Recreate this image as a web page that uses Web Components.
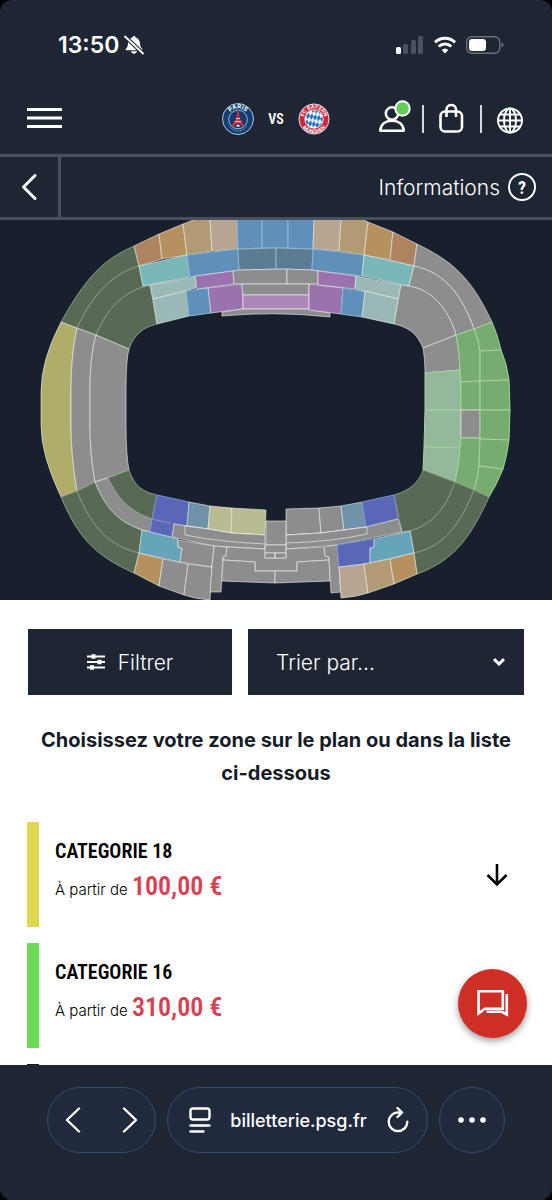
<!DOCTYPE html>
<html lang="fr">
<head>
<meta charset="utf-8">
<meta name="viewport" content="width=device-width, initial-scale=1">
<title>Billetterie</title>
<style>
  html, body {
    margin: 0;
    height: 100%;
    background: #000;
  }
  body {
    font-family: Inter, "Liberation Sans", sans-serif;
    --navy: #1e2533;
    --night: #18202d;
    --line: #4a505e;
    --condensed: "Liberation Sans Narrow", "Roboto Condensed", Roboto, sans-serif;
  }
</style>
</head>
<body>
<ticket-app></ticket-app>

<script>
// Small helper shared by all the elements: opens the shadow root and fills it
class BaseElement extends HTMLElement {
  constructor() {
    super();
    this.attachShadow({ mode: 'open' });
  }

  connectedCallback() {
    this.shadowRoot.innerHTML = this.render();
  }
}

const buttonReset = `
  button {
    appearance: none;
    border: 0;
    margin: 0;
    padding: 0;
    background: none;
    color: inherit;
    font: inherit;
    cursor: pointer;
  }
  svg { display: block; }
`;

// Time, signal, wifi and battery
class StatusBar extends BaseElement {
  render() {
    return `
    <style>
      :host {
        display: flex;
        align-items: center;
        justify-content: space-between;
        padding: 28px 48px 22px 58px;
        height: 34px;
        color: #fff;
      }
      div { display: flex; align-items: center; }
      .time { gap: 5px; font-size: 23px; font-weight: 600; }
      .state { gap: 10px; }
      svg { display: block; }
    </style>
    <div class="time">
      <span>13:50</span>
      <svg width="20" height="20" viewBox="0 0 20 20" fill="#fff">
        <path d="M10 1c.9 0 1.500.6 1.600 1.400C14 3.200 15.800 5.200 16 8c.1 3.500.9 4.500 2.100 5.700.5.6.3 1.500-.6 1.500h-15c-.9 0-1.100-.9-.6-1.500C3.100 12.500 3.900 11.500 4 8c.2-2.800 2-4.800 4.400-5.600C8.500 1.600 9.100 1 10 1z"/>
        <path d="M7 16.300h6c-.3 1.600-1.500 2.400-3 2.400s-2.700-.8-3-2.400z"/>
        <path d="M.5 1 19.500 19" stroke="#1e2533" stroke-width="4"/>
        <path d="M1 1.500 19 18.500" stroke="#fff" stroke-width="1.800" stroke-linecap="round"/>
      </svg>
    </div>
    <div class="state">
      <svg width="28" height="18" viewBox="0 0 28 18" fill="#4b515e">
        <rect x="0" y="11" width="5" height="7" rx="1.500" fill="#fff"/>
        <rect x="7" y="8" width="5" height="10" rx="1.500"/>
        <rect x="15" y="4" width="5" height="14" rx="1.500"/>
        <rect x="22" y="0" width="5" height="18" rx="1.500"/>
      </svg>
      <svg width="22" height="18" viewBox="0 0 22 18" fill="none" stroke="#fff" stroke-width="3">
        <path d="M1 6.300a14.500 14.500 0 0 1 20 0"/>
        <path d="M4.700 10.500a9.200 9.200 0 0 1 12.600 0"/>
        <path d="M11 17.500 7.700 14a4.800 4.800 0 0 1 6.600 0z" fill="#fff" stroke="none"/>
      </svg>
      <svg width="38" height="18" viewBox="0 0 38 18">
        <rect x=".7" y=".7" width="33" height="16.600" rx="5" fill="none" stroke="#6b707b" stroke-width="1.400"/>
        <rect x="3" y="3" width="17" height="12" rx="3" fill="#fff"/>
        <path d="M35.500 6.500c1.400.4 2 1.300 2 2.500s-.6 2.100-2 2.500z" fill="#6b707b"/>
      </svg>
    </div>`;
  }
}
customElements.define('status-bar', StatusBar);

// Round crest of a club, drawn from its "club" attribute
class ClubCrest extends BaseElement {
  render() {
    return `
    <style>
      :host { display: block; }
      svg { display: block; }
      text { font-family: Inter, sans-serif; font-weight: 700; fill: #fff; text-anchor: middle; }
    </style>
    ${this.getAttribute('club') === 'psg' ? this.#psg() : this.#bayern()}`;
  }

  #psg() {
    return `
    <svg width="32" height="32" viewBox="0 0 32 32" role="img" aria-label="PSG">
      <circle cx="16" cy="16" r="15.500" fill="#123f76" stroke="#c9d3de" stroke-width=".9"/>
      <circle cx="16" cy="16.500" r="9.300" fill="#16396c" stroke="#c9d3de" stroke-width=".8"/>
      <path id="arc" d="M6 15.500a10 10 0 0 1 20 0" fill="none"/>
      <text font-size="6"><textPath href="#arc" startOffset="50%">PARIS</textPath></text>
      <path d="M15.500 7h1l.8 6c.4 3.500 2.200 6.500 5 9.300l-2.600 1.500c-.5-2.200-1.700-3.400-3.700-3.400s-3.200 1.200-3.700 3.400l-2.600-1.500c2.800-2.800 4.600-5.800 5-9.300z" fill="#dc2b35"/>
      <path d="M13.800 15.500h4.400M12.500 18.600h7" stroke="#e9edf2" stroke-width=".8"/>
      <path d="M14 23.500c.3-1.200 1-1.800 2-1.800s1.700.6 2 1.800z" fill="#fff"/>
      <path d="M7.500 23.500c4.800 6 12.200 6 17 0" fill="none" stroke="#8fa6c2" stroke-width="1" stroke-dasharray="1 .7"/>
    </svg>`;
  }

  #bayern() {
    return `
    <svg width="32" height="32" viewBox="0 0 32 32" role="img" aria-label="FC Bayern">
      <defs>
        <pattern id="lozenge" width="3.600" height="7" patternUnits="userSpaceOnUse" patternTransform="rotate(12)">
          <rect width="3.600" height="7" fill="#fff"/>
          <path d="M1.800 0 3.600 3.500 1.800 7 0 3.500z" fill="#1568b4"/>
        </pattern>
      </defs>
      <circle cx="16" cy="16" r="15.600" fill="#2a62a5"/>
      <circle cx="16" cy="16" r="15" fill="#d32439" stroke="#fff" stroke-width=".8"/>
      <circle cx="16" cy="16" r="9.200" fill="url(#lozenge)" stroke="#fff" stroke-width=".8"/>
      <path id="top" d="M5.500 16a10.500 10.500 0 0 1 21 0" fill="none"/>
      <path id="low" d="M1.700 16a14.300 14.300 0 0 0 28.600 0" fill="none"/>
      <text font-size="5"><textPath href="#top" startOffset="50%">FC BAYERN</textPath></text>
      <text font-size="5"><textPath href="#low" startOffset="50%">MÜNCHEN</textPath></text>
    </svg>`;
  }
}
customElements.define('club-crest', ClubCrest);

class SiteHeader extends BaseElement {
  render() {
    return `
    <style>
      ${buttonReset}
      :host {
        display: grid;
        grid-template-columns: 1fr auto 1fr;
        align-items: center;
        height: 70px;
        padding: 0 29px 0 29px;
        color: #fff;
      }
      .menu { justify-self: start; }
      .match { display: flex; align-items: center; gap: 14px; }
      .match span { font: 600 14px var(--condensed); }
      .tools { justify-self: end; display: flex; align-items: center; gap: 11px; }
      .tools i { width: 2px; height: 28px; background: #d7d9dd; }
    </style>
    <button class="menu" aria-label="Menu">
      <svg width="34" height="24" viewBox="0 0 34 24" stroke="#fff" stroke-width="3" overflow="visible">
        <path d="M-2 2.500h35M-2 11h35M-2 19.500h35"/>
      </svg>
    </button>
    <div class="match">
      <club-crest club="psg"></club-crest>
      <span>VS</span>
      <club-crest club="bayern"></club-crest>
    </div>
    <div class="tools">
      <button aria-label="Mon compte">
        <svg width="36" height="38" viewBox="375 100 36 38" fill="none" stroke="#fff" stroke-width="2.600">
          <circle cx="392" cy="113.500" r="6.200"/>
          <path d="M380.300 130.700c.4-6.300 5-10 11.700-10s11.300 3.700 11.700 10z" stroke-linejoin="round"/>
          <circle cx="402.500" cy="108.500" r="7.200" fill="#62ce55" stroke-width="2"/>
        </svg>
      </button>
      <i></i>
      <button aria-label="Panier">
        <svg width="34" height="38" viewBox="435 100 34 38" fill="none" stroke="#fff" stroke-width="2.600">
          <rect x="440.500" y="111.500" width="21.500" height="20" rx="4.500"/>
          <path d="M446.500 117v-7.500c0-6 9.500-6 9.500 0v7.500"/>
        </svg>
      </button>
      <i></i>
      <button aria-label="Langue">
        <svg width="30" height="38" viewBox="493 101 30 38" fill="none" stroke="#fff" stroke-width="1.900">
          <circle cx="510" cy="121.500" r="12"/>
          <ellipse cx="510" cy="121.500" rx="6" ry="12"/>
          <path d="M510 109.500v24M498 121.500h24M500 115.500h20M500 127.500h20"/>
        </svg>
      </button>
    </div>`;
  }
}
customElements.define('site-header', SiteHeader);

// Back button on the left, help on the right
class SubHeader extends BaseElement {
  render() {
    return `
    <style>
      ${buttonReset}
      :host {
        display: flex;
        justify-content: space-between;
        height: 60px;
        border-top: 3px solid var(--line);
        border-bottom: 3px solid var(--line);
        color: #fff;
      }
      button { display: flex; align-items: center; }
      .back { width: 58px; border-right: 3px solid var(--line); justify-content: center; box-sizing: content-box; }
      .info { gap: 8px; padding-right: 16px; font-size: 21px; font-weight: 300; }
      .mark {
        display: grid;
        place-items: center;
        box-sizing: border-box;
        width: 28px;
        height: 28px;
        border: 2px solid #fff;
        border-radius: 50%;
        font: 700 18px var(--condensed);
      }
    </style>
    <button class="back" aria-label="Retour">
      <svg width="16" height="28" viewBox="0 0 16 28" fill="none" stroke="#fff" stroke-width="3" stroke-linecap="round" stroke-linejoin="round">
        <path d="M14 2.500 2.500 14 14 25.500"/>
      </svg>
    </button>
    <button class="info"><slot></slot><span class="mark">?</span></button>`;
  }
}
customElements.define('sub-header', SubHeader);

// Fill of each price zone
const tones = {
  off: '#8d8d8d', forest: '#586a56', olive: '#b0ad6b', green: '#76ac70', mint: '#94b99a',
  rust: '#ad8360', orange: '#b5915f', sand: '#b29a75', blush: '#b7a592',
  blue: '#6090ba', steel: '#5c7c91', teal: '#79b7b8', ice: '#99b8b6',
  purple: '#9a72ae', lilac: '#ab86b8', indigo: '#5867b6', slate: '#6f92a8',
  khaki: '#b9bb92', lagoon: '#66a4ba'
};

// [tone, outline], grouped by side of the stadium
const zones = [
  // north-west corner
  ['forest', 'M134 246C108 258 90 270 61 322L77 328C90 300 108 275 139 266Z'],
  ['forest', 'M139 266C108 275 90 300 77 328L96 335C106 311 122 291 150 285L143 286Z'],
  ['forest', 'M150 285C122 291 106 311 96 335L129 349C134 334 144 327 157 324Z'],
  // west
  ['olive', 'M61 322Q41 360 41 392V425Q41 455 61 497L77 491Q71 455 71 425V390Q71 355 77 328Z'],
  ['off', 'M77 328Q71 355 71 390V425Q71 455 77 491L95 482Q90 455 90 425V390Q90 355 96 335Z'],
  ['off', 'M96 335Q90 355 90 390V425Q90 455 95 482L129 470Q126 455 126 425V390Q126 360 129 349Z'],
  // south-west corner
  ['forest', 'M61 497C78 537 94 555 134 573L139 553C108 545 92 528 77 491Z'],
  ['forest', 'M77 491C92 528 108 545 139 553L142 530C120 522 107 508 95 482Z'],
  ['off', 'M95 482C107 512 122 525 150 532L152 519C130 511 119 500 108 478Z'],
  ['forest', 'M108 478C119 500 130 511 152 519L157 495C143 492 134 486 129 470Z'],
  // north, upper row
  ['rust', 'M134 246 159 234 162 259 139 266Z'],
  ['orange', 'M159 234 183 224 187 255 162 259Z'],
  ['sand', 'M183 224 196 219H210L212 251 187 255Z'],
  ['blush', 'M210 219H237L238 249 212 251Z'],
  ['blue', 'M237 219H262V248L238 249Z'],
  ['blue', 'M262 219H288V248H262Z'],
  ['blue', 'M288 219H314L313 249 288 248Z'],
  ['blush', 'M314 219H341L339 251 313 249Z'],
  ['sand', 'M341 219H362L368 222 364 255 339 251Z'],
  ['orange', 'M368 222 393 232 390 260 364 255Z'],
  ['rust', 'M393 232 417 244 414 266 390 260Z'],
  // north, second row
  ['teal', 'M139 266 187 255 190 277 143 286Z'],
  ['blue', 'M187 255 238 249 239 270 190 277Z'],
  ['steel', 'M238 249 276 248V269L239 270Z'],
  ['steel', 'M276 248 313 249 312 270 276 269Z'],
  ['blue', 'M313 249 364 255 362 276 312 270Z'],
  ['teal', 'M364 255 414 266 409 286 362 276Z'],
  // north, lower rows
  ['ice', 'M150 285 195 277 196 288 153 299Z'],
  ['ice', 'M153 299 186 291 189 316 157 324Z'],
  ['blue', 'M186 291 208 288 211 313 189 316Z'],
  ['purple', 'M195 276 233 271 234 284 197 289Z'],
  ['purple', 'M208 288 242 284 243 309 211 313Z'],
  ['off', 'M233 271 239 270 287 269V284H234Z'],
  ['off', 'M287 269 312 270 318 271V284H287Z'],
  ['off', 'M242 284H309V295H243Z'],
  ['lilac', 'M243 295H309V309H243Z'],
  ['off', 'M222 312 243 309H309L330 313V317Q276 311 222 316Z'],
  ['purple', 'M318 271 356 276 355 289 318 285Z'],
  ['purple', 'M309 284 343 288 341 314 309 310Z'],
  ['blue', 'M343 288 365 292 362 317 341 314Z'],
  ['ice', 'M356 276 401 285 398 299 355 289Z'],
  ['ice', 'M365 291 398 299 394 324 362 317Z'],
  // north-east corner
  ['off', 'M417 244C452 261 471 277 492 322L474 329C462 296 446 273 414 266Z'],
  ['off', 'M414 266C446 273 462 296 474 329L456 335C448 308 432 290 409 286Z'],
  ['off', 'M401 285 409 286C432 290 448 308 456 335L423 348C417 333 408 327 394 324Z'],
  // east
  ['off', 'M423 348 456 335Q460 352 460 370L425 373Q425 358 423 348Z'],
  ['mint', 'M425 373 460 370 461 410H425Z'],
  ['mint', 'M425 410H461L460 448 424 447Z'],
  ['mint', 'M424 447 460 448Q459 466 455 482L423 470Z'],
  ['green', 'M456 335 474 329Q479 340 480 351V381L461 382 460 370Q460 352 456 335Z'],
  ['green', 'M461 382 480 381V410H461Z'],
  ['off', 'M461 410H480V438H461Z'],
  ['green', 'M461 438H480L479 466Q478 478 474 490L455 482Q459 466 460 448Z'],
  ['green', 'M474 329 492 322Q498 336 501 350L480 351Q479 340 474 329Z'],
  ['green', 'M480 351 501 350Q507 364 509 380L480 381Z'],
  ['green', 'M480 381 509 380 510 410H480Z'],
  ['green', 'M480 410H510L509 440 480 439Z'],
  ['green', 'M480 439 509 440Q507 456 503 469L479 466Z'],
  ['green', 'M479 466 503 469Q497 484 489 497L474 490Q478 478 479 466Z'],
  // south-east corner
  ['forest', 'M423 470 455 482C446 507 434 524 410 531L402 532 394 495C412 490 420 480 423 470Z'],
  ['forest', 'M455 482 474 490C461 523 444 547 414 553L410 531C434 524 446 507 455 482Z'],
  ['forest', 'M474 490 489 497C472 534 456 560 417 574L414 553C444 547 461 523 474 490Z'],
  // south, pitch side
  ['indigo', 'M157 495 189 502 187 526 152 519Z'],
  ['indigo', 'M152 519 174 525 172 537 150 532Z'],
  ['slate', 'M189 502 210 506 208 529 187 526Z'],
  ['khaki', 'M210 506 232 508 231 533 208 529Z'],
  ['khaki', 'M232 508 266 510 265 535 231 533Z'],
  ['off', 'M174 524 187 526 208 529 231 533 265 535V549L214 546 172 537Z'],
  ['off', 'M185 526 208 529 231 533 265 535V544Q220 542 185 535Z'],
  ['off', 'M286 509 319 508 321 533 286 535Z'],
  ['off', 'M319 508 341 506 344 530 321 533Z'],
  ['slate', 'M341 506 362 502 366 527 344 530Z'],
  ['indigo', 'M362 502 394 495 398 519 366 527Z'],
  ['off', 'M286 535 321 533 344 530 366 527 398 519 402 532 337 545 286 549Z'],
  ['off', 'M286 535 321 533 344 530 367 527V534Q330 542 286 543Z'],
  ['off', 'M266 521H286V545H266Z'],
  ['off', 'M265 545H286V553H265Z'],
  // south, stands
  ['lagoon', 'M142 530 178 539V547L182 548 180 562 139 553Z'],
  ['orange', 'M139 553 163 559 159 586 134 573Z'],
  ['off', 'M163 559 188 564 184 595 159 586Z'],
  ['off', 'M188 564 212 567 210 600Q196 599 184 595Z'],
  ['off', 'M178 540 214 546 212 567 180 562 182 548 178 547Z'],
  ['off', 'M214 546 227 547 226 556 223 557 221 592H210L212 567Z'],
  ['off', 'M227 547 265 549V558H286V549L324 547 325 556 329 557V560L297 562V571H255V562L223 560V557L226 556Z'],
  ['off', 'M223 560 255 562V571H275V583L222 581Z'],
  ['off', 'M275 571H297V562L329 560 330 581 275 583Z'],
  ['off', 'M265 553H275V558H265ZM275 553H286V558H275Z'],
  ['off', 'M324 547 337 545 339 567 341 592 331 593 329 557 325 556Z'],
  ['indigo', 'M337 545 374 539V547L370 548V563L339 567Z'],
  ['lagoon', 'M374 539 410 531 414 553 370 563V548L374 547Z'],
  ['blush', 'M339 567 364 564 368 593Q356 597 341 598Z'],
  ['sand', 'M364 564 390 559 394 584 368 593Z'],
  ['orange', 'M390 559 414 553 417 574 394 584Z']
];

// Seating plan of the stadium
class StadiumMap extends BaseElement {
  render() {
    const paths = zones.map(([tone, d]) =>
      `<path class="${tone}" d="${d}" fill="${tones[tone]}"/>`).join('');
    return `
    <style>
      :host { display: block; background: var(--night); }
      svg { display: block; width: 100%; height: auto; }
      path { stroke: rgba(255, 255, 255, .55); stroke-width: 1; stroke-linejoin: round; }
      .forest { stroke: #8b9a89; }
      .green, .mint { stroke: #a5d49f; }
      .blue, .steel { stroke: #8fb6cf; }
      .indigo { stroke: #7f8fd4; }
    </style>
    <svg viewBox="0 220 552 380" role="img" aria-label="Plan du stade">${paths}</svg>`;
  }
}
customElements.define('stadium-map', StadiumMap);

// Filter button and sort menu
class ListControls extends BaseElement {
  render() {
    return `
    <style>
      ${buttonReset}
      :host {
        display: grid;
        grid-template-columns: 17fr 23fr;
        gap: 16px;
        font-size: 21px;
        font-weight: 300;
        color: #fff;
      }
      button, .sort { height: 66px; background: var(--navy); }
      button { display: flex; align-items: center; justify-content: center; gap: 13px; }
      .sort { display: grid; align-items: center; }
      select, .sort svg { grid-area: 1 / 1; }
      select {
        appearance: none;
        width: 100%;
        height: 100%;
        border: 0;
        border-radius: 0;
        padding: 0 28px;
        background: none;
        color: inherit;
        font: inherit;
      }
      .sort svg { justify-self: end; margin-right: 19px; pointer-events: none; }
    </style>
    <button>
      <svg width="18" height="16" viewBox="0 0 18 16" stroke="#fff" stroke-width="2">
        <path d="M0 2.500h18M0 8h18M0 13.500h18"/>
        <path d="M4.500 2.500h4M10.500 8h4M3 13.500h4" stroke-width="4.400"/>
      </svg>
      Filtrer
    </button>
    <label class="sort">
      <select aria-label="Trier par">
        <option>Trier par...</option>
        <option>Prix croissant</option>
        <option>Prix décroissant</option>
      </select>
      <svg width="12" height="10" viewBox="0 0 12 10" fill="none" stroke="#fff" stroke-width="3">
        <path d="M1 2.200 6 7l5-4.800"/>
      </svg>
    </label>`;
  }
}
customElements.define('list-controls', ListControls);

// One price category; the slot takes its name
class CategoryCard extends BaseElement {
  render() {
    const price = this.getAttribute('price');
    const opener = this.hasAttribute('openable') ? `
      <button aria-label="Afficher les places">
        <svg width="24" height="24" viewBox="0 0 24 24" fill="none" stroke="#000" stroke-width="2.600">
          <path d="M12 1v20M2.500 12 12 21.500 21.500 12"/>
        </svg>
      </button>` : '';
    return `
    <style>
      ${buttonReset}
      :host {
        display: flex;
        align-items: center;
        justify-content: space-between;
        box-sizing: border-box;
        height: 105px;
        padding: 0 16px;
        border-left: 12px solid ${this.getAttribute('color')};
      }
      h3, p { margin: 0; color: #000; }
      h3 { font: 600 20px/32px var(--condensed); }
      p { font-size: 15px; font-weight: 300; line-height: 38px; }
      strong { font: 600 26px/38px var(--condensed); color: #dc3f52; }
      .text { padding-bottom: 5px; }
    </style>
    ${price ? `
    <div class="text">
      <h3><slot></slot></h3>
      <p>À partir de <strong>${price}</strong></p>
    </div>` : ''}
    ${opener}`;
  }
}
customElements.define('category-card', CategoryCard);

class ChatButton extends BaseElement {
  render() {
    return `
    <style>
      ${buttonReset}
      :host { display: block; }
      button {
        display: grid;
        place-items: center;
        width: 69px;
        height: 69px;
        border-radius: 50%;
        background: #cf2e27;
        box-shadow: 0 3px 7px rgba(0, 0, 0, .4);
      }
    </style>
    <button aria-label="Discuter">
      <svg width="32" height="30" viewBox="0 0 32 30" fill="none" stroke="#fff" stroke-width="2.600">
        <path d="M1.600 2.300h24.200v17.500H7.800l-6.200 4.700z"/>
        <path d="M29.800 5v20.500l-5-2.700H9.500"/>
      </svg>
    </button>`;
  }
}
customElements.define('chat-button', ChatButton);

// Browser toolbar at the bottom
class BrowserBar extends BaseElement {
  render() {
    return `
    <style>
      ${buttonReset}
      :host {
        display: flex;
        gap: 11px;
        padding: 22px 47px 47px;
        background: var(--navy);
        color: #fff;
      }
      .pill {
        display: flex;
        align-items: center;
        justify-content: space-between;
        box-sizing: border-box;
        height: 66px;
        border: 1px solid #3a4a70;
        border-radius: 33px;
        background: #212a3d;
      }
      .nav { width: 109px; padding: 0 17px; }
      .address { flex: 1; padding: 0 17px 0 21px; }
      .more { width: 66px; justify-content: center; }
      .url { font-size: 18px; font-weight: 500; }
      svg { fill: none; stroke: #fff; stroke-width: 2.400; stroke-linecap: round; stroke-linejoin: round; }
    </style>
    <div class="pill nav">
      <button aria-label="Page précédente"><svg width="16" height="26" viewBox="0 0 16 26"><path d="M14 1.500 2 13l12 11.500"/></svg></button>
      <button aria-label="Page suivante"><svg width="16" height="26" viewBox="0 0 16 26"><path d="m2 1.500 12 11.500L2 24.500"/></svg></button>
    </div>
    <div class="pill address">
      <button aria-label="Affichage">
        <svg width="22" height="26" viewBox="0 0 22 26">
          <rect x="1.500" y="1.500" width="19" height="11" rx="2.500"/>
          <path d="M1.500 18.500h19M1.500 24.500h13"/>
        </svg>
      </button>
      <button class="url">billetterie.psg.fr</button>
      <button aria-label="Recharger">
        <svg width="24" height="26" viewBox="0 0 24 26">
          <path d="M14 5.500h-2a9.300 9.300 0 1 0 9.300 9.300"/>
          <path d="M11.500 1 16 5.500 11.500 10"/>
        </svg>
      </button>
    </div>
    <button class="pill more" aria-label="Plus">
      <svg width="28" height="6" viewBox="0 0 28 6" style="fill:#fff;stroke:none">
        <circle cx="3" cy="3" r="2.800"/><circle cx="14" cy="3" r="2.800"/><circle cx="25" cy="3" r="2.800"/>
      </svg>
    </button>`;
  }
}
customElements.define('browser-bar', BrowserBar);

class TicketApp extends BaseElement {
  render() {
    return `
    <style>
      :host {
        display: flex;
        flex-direction: column;
        height: 100vh;
        overflow: hidden;
        border-radius: 12px;
        background: var(--navy);
      }
      /* the list scrolls behind the toolbar */
      main {
        flex: 1;
        min-height: 0;
        overflow: hidden;
        position: relative;
        background: #fff;
      }
      list-controls { margin: 29px 28px; }
      h2 {
        margin: 0 28px 32px;
        color: #161c27;
        font-size: 20px;
        font-weight: 700;
        line-height: 33px;
        text-align: center;
      }
      .list { display: grid; gap: 16px; margin: 0 27px; }
      chat-button { position: absolute; right: 25px; bottom: 27px; }
    </style>
    <status-bar></status-bar>
    <site-header></site-header>
    <sub-header>Informations</sub-header>
    <main>
      <stadium-map></stadium-map>
      <list-controls></list-controls>
      <h2>Choisissez votre zone sur le plan ou dans la liste ci-dessous</h2>
      <div class="list">
        <category-card color="#e0d750" price="100,00 €" openable>CATEGORIE 18</category-card>
        <category-card color="#6bdb57" price="310,00 €">CATEGORIE 16</category-card>
        <category-card color="#10241a"></category-card>
      </div>
      <chat-button></chat-button>
    </main>
    <browser-bar></browser-bar>`;
  }
}
customElements.define('ticket-app', TicketApp);
</script>
</body>
</html>
